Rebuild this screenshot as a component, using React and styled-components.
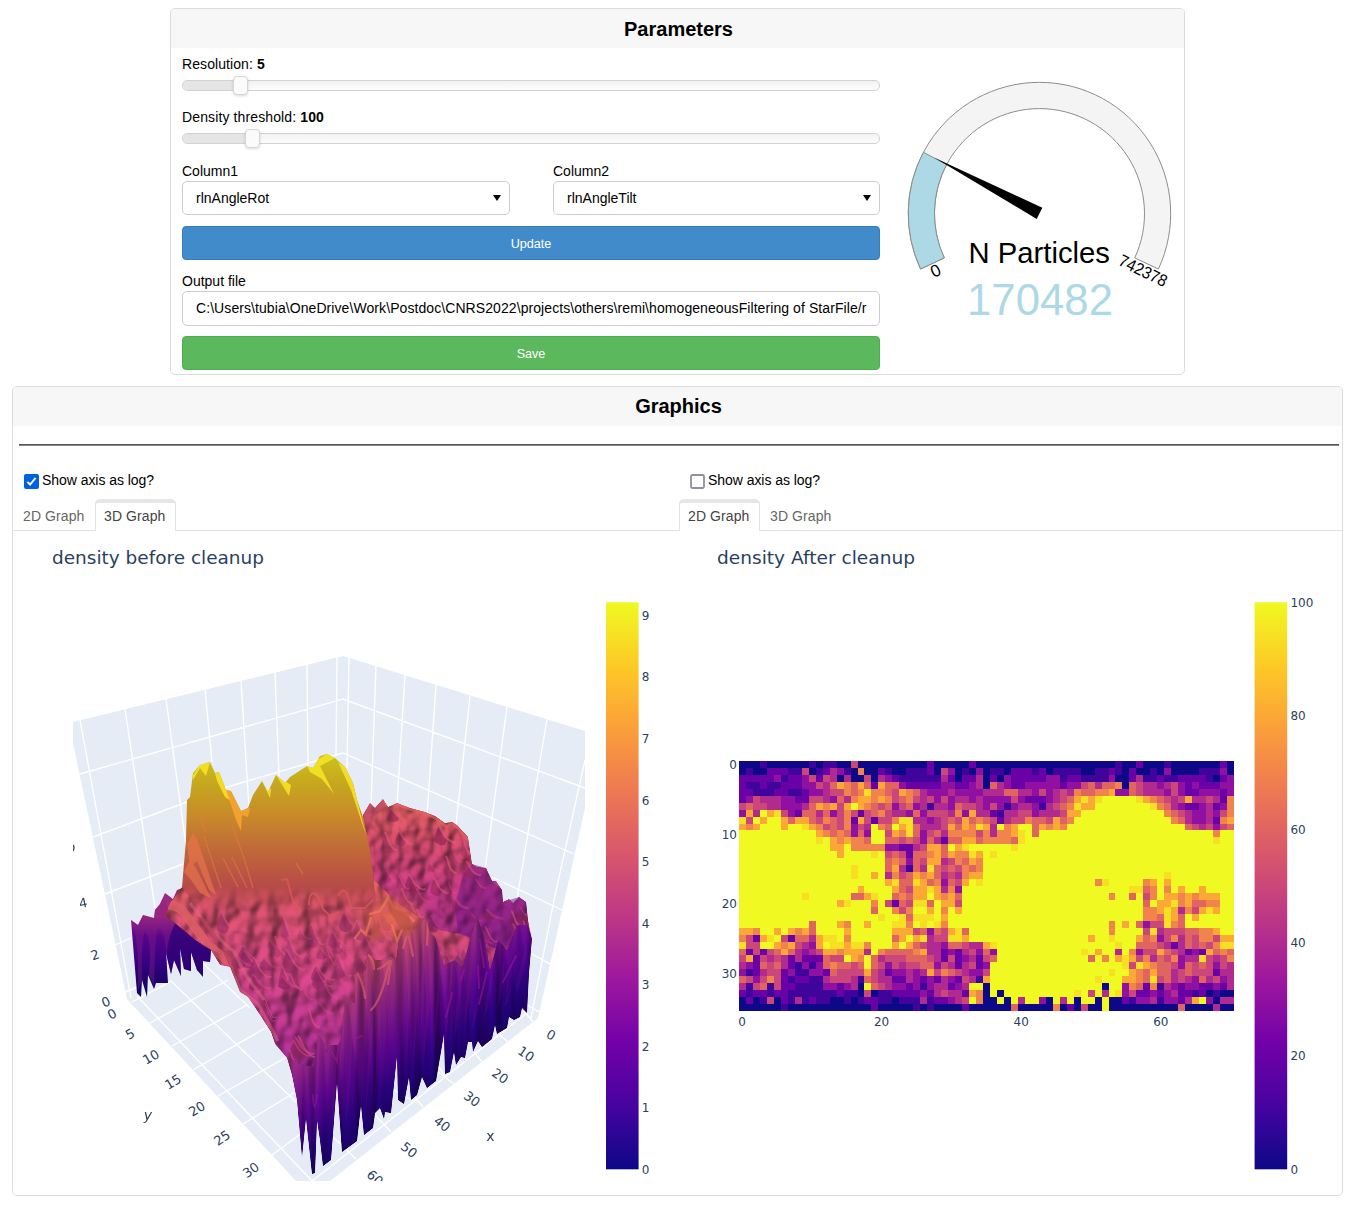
import React from 'react';
import styled, { createGlobalStyle } from 'styled-components';

const Global = createGlobalStyle`
  *, *::before, *::after { box-sizing: border-box; }
  body { margin: 0; background: #fff; color: #000; font: 14px/16px "Liberation Sans", Arial, sans-serif; }
`;
const Page = styled.main`
  width: 1371px; height: 1210px; padding: 8px 28px 14px 12px;
  display: flex; flex-direction: column; align-items: flex-start; gap: 11px; overflow: hidden;
`;
const Card = styled.section`
  width: ${p => p.$w}px; height: ${p => p.$h}px; margin-left: ${p => p.$indent || 0}px;
  border: 1px solid #dcdcdc; border-radius: 5px; overflow: hidden; background: #fff;
`;
const CardHeader = styled.h2`
  margin: 0; height: 39px; background: #f7f7f7; font-size: 20px; line-height: ${p => p.$line || 39}px;
  font-weight: bold; text-align: center; padding-left: 2px;
`;
const ParamsBody = styled.div`display: flex; padding-left: 11px;`;
const Form = styled.div`width: 698px; padding-top: 8px; display: flex; flex-direction: column;`;
const Label = styled.label`display: block; height: 16px; margin-top: ${p => p.$top || 0}px; letter-spacing: ${p => p.$track || 0}px;`;
const Track = styled.div`
  height: 11px; margin-top: 8px; border: 1px solid #d2d2d2; border-radius: 5px;
  background: linear-gradient(#f2f2f2, #fcfcfc); display: flex; align-items: center;
`;
const Fill = styled.div`width: ${p => p.$w}px; height: 9px; background: #e5e5e5; border-radius: 4px 0 0 4px;`;
const Handle = styled.div`
  width: 15px; height: 19px; flex: none; border: 1px solid #d5d5d5; border-radius: 4px;
  background: #fbfbfb; box-shadow: 0 1px 3px rgba(0,0,0,.14);
`;
const Columns = styled.div`display: flex; justify-content: space-between; margin-top: 19px;`;
const Field = styled.div`width: ${p => p.$w}px;`;
const Select = styled.div`
  height: 34px; margin-top: 2px; padding: 0 8px 0 13px; border: 1px solid #ccc; border-radius: 5px;
  display: flex; align-items: center; justify-content: space-between;
  &::after { content: ''; border: 4px solid transparent; border-top: 6px solid #000; border-bottom: 0; }
`;
const Button = styled.button`
  height: 34px; margin-top: ${p => p.$top}px; padding: 1px 0 0; border: 1px solid ${p => p.$edge}; border-radius: 4px;
  background: ${p => p.$bg}; color: #fff; font: 12.6px "Liberation Sans", Arial, sans-serif;
`;
const PathBox = styled.div`
  height: 35px; margin-top: 2px; padding: 0 13px; border: 1px solid #ccc; border-radius: 5px; line-height: 33px;
`;
const PathText = styled.div`white-space: nowrap; letter-spacing: 0.077px;`;
const GaugeSvg = styled.svg`display: block; margin: 33px 0 0 27px; overflow: visible; font-family: "Liberation Sans", Arial, sans-serif;`;
const Rule = styled.hr`margin: 18px 3px 0 6px; height: 2px; border: 0; border-top: 1px solid #555; background: #888;`;
const Plots = styled.div`display: flex; margin-top: 27px;`;
const Pane = styled.div`width: ${p => p.$w}px;`;
const CheckRow = styled.label`display: flex; align-items: center; height: 17px; padding-left: 11px; gap: 3px; line-height: 15px;`;
const Box = styled.span`
  width: 15px; height: 15px; margin-top: -1px; border-radius: 2px; display: flex;
  background: ${p => (p.$on ? '#0060df' : '#fff')};
  svg { display: block; }
`;
const CheckText = styled.span`margin-top: -2px; letter-spacing: -0.05px;`;
const Tabs = styled.div`display: flex; height: 32px; margin-top: 9px; border-bottom: 1px solid #e2e2e2;`;
const Tab = styled.div`
  width: ${p => (p.$active ? 81 : 82)}px; height: ${p => (p.$active ? 32 : 31)}px; letter-spacing: 0.1px;
  padding: ${p => (p.$active ? '5px 0 0 8px' : '9px 0 0 10px')};
  color: ${p => (p.$active ? '#444' : '#666')};
  ${p => p.$active && 'border: 1px solid #e2e2e2; border-top: 4px solid #e6e6e6; border-bottom: 0; border-radius: 5px 5px 0 0; background: #fff;'}
`;
const PlotSvg = styled.svg`
  display: block; font-family: "DejaVu Sans", Verdana, sans-serif; font-size: 12px;
  text { fill: #2a3f5f; }
`;

const plasma = ['#0d0887', '#46039f', '#7201a8', '#9c179e', '#bd3786', '#d8576b', '#ed7953', '#fb9f3a', '#fdca26', '#f0f921'];
function heat(t) {
  const p = Math.min(0.9999, Math.max(0, t)) * 9;
  const i = Math.floor(p), f = p - i;
  const c = k => [1, 3, 5].map(n => parseInt(plasma[k].slice(n, n + 2), 16));
  const a = c(i), b = c(i + 1);
  return `rgb(${a.map((v, n) => Math.round(v + (b[n] - v) * f)).join(',')})`;
}

const Y = 'YYYYYYYYYY';
const rows = [
  ['0001000000', '1011005000', '0000000200', '0002000000', '0000000000', '0000100200', '0100000002', '0'],
  ['0100222115', '0124310700', '2100111205', '3010301102', '2212011110', '0112102001', '0300001113', '0'],
  ['2222231223', '5254040050', '4321111114', '2022402032', '2222331221', '1113002411', '2112222102', '3'],
  ['2112112223', '3546876862', '8663222223', '3223406432', '2333332335', '6466706544', '3453232223', '3'],
  ['2211122112', '3345576797', '7658764333', '4333344466', '4435345476', '6778336544', '4353223332', '3'],
  ['2354443322', '5543647887', '8756754535', '3443433335', '3222345689', '89YYYYY987', '6545844542', '7'],
  ['5655443334', '687858Y876', '5635634144', '3655435313', '4431456798', '8YYYYYYYY9', '7643223423', '7'],
  ['384Y895326', '6463575256', '7544363555', '4738442144', '553444588Y', Y, 'Y765433435', '7'],
  ['95Y8YY8688', '6576572852', '5579944345', '6586765245', '57665867YY', Y, 'YY76433427', '8'],
  ['878YYY8YY9', '875657354Y', '76Y8964445', '8687984Y78', 'YY68787YYY', Y, 'YYYY654535', '6'],
  [Y, 'Y87676363Y', 'Y587963564', '7777574778', '9Y6YYYYYYY', Y, 'YYYYYYYY7Y', 'Y'],
  [Y, 'Y9Y878776Y', 'Y665653642', '6688677776', '9YYYYYYYYY', Y, 'YYYYYYYY9Y', 'Y'],
  [Y, 'YYY88Y7777', '7332245886', 'Y89YYYYYY9', Y, Y, Y, 'Y'],
  [Y, 'YYYY8YYYY9', 'Y565266786', '87798Y9YYY', Y, Y, Y, 'Y'],
  [Y, Y, 'Y676365884', '57687YYYYY', Y, Y, Y, 'Y'],
  [Y, 'YYYYYY9YYY', 'Y684164965', '65767YYYYY', Y, Y, Y, 'Y'],
  [Y, 'YYYYYY9YY8', 'Y475687864', '54788YYYYY', Y, Y, 'Y9YYYYYYYY', 'Y'],
  [Y, Y, 'Y896698673', '658Y9YYYYY', Y, 'Y79YYYYY78', 'Y8YYYYYYYY', 'Y'],
  [Y, 'YYYYYYY8YY', 'YY86588984', '73YYYYYYYY', Y, 'YYYYYY9967', 'Y7Y8YY8YYY', 'Y'],
  ['YYYYYYYYY9', 'YYYYYY6689', 'YY67688Y87', '86YYYYYYYY', Y, 'YYY7YY6Y57', 'Y88787888Y', 'Y'],
  [Y, 'YYYY89YYY7', 'Y5265996Y8', '85YYYYYYYY', Y, 'YYYYYYYY6Y', '889786677Y', 'Y'],
  [Y, 'YYYYYYYYY6', 'YY757YY8Y7', 'Y8YYYYYYYY', Y, 'YYYYYYYY77', '898475898Y', 'Y'],
  [Y, Y, '9YY96999Y8', Y, Y, 'YYYYYYYY77', '6986Y8YYYY', 'Y'],
  [Y, '6YYY87YY8Y', 'YY997Y9Y97', Y, Y, 'YYY7Y8Y635', '5976YYYYYY', 'Y'],
  ['887YY8Y878', '6YYYY8YYYY', 'YY88856365', '896YYYYYYY', Y, 'YYY7YYYY59', '455566778Y', 'Y'],
  ['75289Y5266', '4899Y7YYYY', 'YY68Y89455', '998YYYYYYY', Y, '8YY9YYY867', '3574657758', '8'],
  ['955YY87854', '38Y998997Y', 'YY8Y865443', '6654489YYY', Y, 'YYYY9YY666', '5424656579', '9'],
  ['6252568643', '458878884Y', '7666678442', '3245363YYY', 'YYYYYYYYY9', 'Y8YY4Y7355', '8654232867', '6'],
  ['5825454242', '22655Y87Y6', '4555666542', '5234256YYY', Y, '6Y7Y898574', '6573449545', '7'],
  ['4326564213', '13676656Y6', '5354556635', '424523YYYY', Y, 'YYYYY95987', '6653656535', '4'],
  ['3124552311', '3326555585', '4233434857', '654335YYYY', Y, 'YYY9YY8768', '6645655524', '4'],
  ['6535752122', '1145554165', '4422432324', '325418YYYY', Y, 'Y9YYY88769', '5645436453', '4'],
  ['4156152211', '11332340Y6', '5433231344', '234YY0YYYY', Y, 'YY0YY37627', '1432332232', '4'],
  ['2122122111', '1111211050', '1122223245', '442870Y0YY', 'YYYYYYYY9Y', '5Y4Y935223', '2342212010', '0'],
  ['0201502141', '2110010122', '1101114122', '345Y700Y0Y', '4YY30Y4Y0Y', 'Y0Y0021334', '133248Y304', '4'],
  ['0000001000', '0000000002', '0000010100', '0020000006', '0000070205', '00Y0000000', '0006000040', '0'],
].map(r => r.join(''));

const level = ch => (ch === 'Y' ? 1 : Number(ch) / 10 + (ch === '9' ? 0.04 : 0));

function Gauge() {
  return (
    <GaugeSvg width="266" height="242" viewBox="907 81 266 242">
      <path d="M920.6 269A131.2 131.2 0 1 1 1158.4 269L1134.7 257.9A105 105 0 1 0 944.3 257.9Z" fill="#f4f4f4" stroke="#8c8c8c" strokeWidth="1" />
      <path d="M920.6 269A131.2 131.2 0 0 1 923.4 152.3L946.6 164.5A105 105 0 0 0 944.3 257.9Z" fill="#add8e6" stroke="#8c8c8c" strokeWidth="1" />
      <path d="M934 157.5L1042.3 207.7L1036.7 219Z" />
      <text x="968.5" y="262.5" fontSize="29" textLength="141.5" lengthAdjust="spacingAndGlyphs">N Particles</text>
      <text x="967" y="314.5" fontSize="44" fill="#add8e6" textLength="146" lengthAdjust="spacingAndGlyphs">170482</text>
      <text fontSize="17" textAnchor="middle" transform="translate(938 276) rotate(-25)">0</text>
      <text fontSize="17" textAnchor="middle" transform="translate(1140.5 276) rotate(26)" textLength="52" lengthAdjust="spacingAndGlyphs">742378</text>
    </GaugeSvg>
  );
}

function ColorBar({ x, id, ticks }) {
  return (
    <g>
      <linearGradient id={id} x1="0" y1="1" x2="0" y2="0">
        {plasma.map((c, i) => <stop key={c} offset={i / 9} stopColor={c} />)}
      </linearGradient>
      <rect x={x} y="602.3" width="32.6" height="567" fill={`url(#${id})`} />
      {ticks.map(([t, y]) => <text key={t} x={x + 35.8} y={y + 4.5}>{t}</text>)}
    </g>
  );
}

const gridLines = `M80 720L131 998M125 709L155 908M166 699L187 853M205 689L212 762M241 681L249 808M275 672L279 776M307 664L308 768
M337 657L336 756M349 657L347 768M376 666L371 805M405 675L397 805M436 685L427 815M470 696L456 825M507 707L485 870M547 719L517 899M585 760L554 900L531 1018
M80 774L343 699L585 788M93 837L227 787L343 753L574 854M105 894L183 864M492 877L562 910M115 945L131 938M532 954L550 964M125 992L140 986M527 1005L539 1012
M132 1002L170 982M150 1023L228 980M172 1046L247 1005M193 1070L267 1027M218 1096L285 1058M243 1124L297 1091M272 1155L302 1133
M137 996L312 1181L527 1013M170 980L297 1103M203 963L250 1008M523 1010L533 1022M500 1035L508 1042M474 1052L482 1062M438 1072L454 1084M415 1097L423 1107M375 1115L391 1132M333 1137L356 1159M400 1000L445 1077M340 1060L417 1103`;

const frontEdge = `532,939 529,973 527,1013 522,1008 520,1017 514,1020 509,1017 507,1028 497,1034 495,1025 492,1039 482,1047 478,1041 473,1052 472,1042 468,1042 465,1058 461,1057 456,1065 454,1052 450,1072 445,1074 444,1034 436,1081 427,1088 422,1077 417,1095 411,1100 409,1077 404,1104 398,1100 397,1056 391,1113 385,1112 384,1119 380,1108 375,1113 373,1128 364,1135 361,1105 357,1141 342,1152 337,1082 331,1160 323,1166 320,1140 317,1120 315,1173 312,1174 306,1118 302,1157 297,1100 292,1075`;
const body = `182,887 200,870 260,850 363,860 363,815 370,803 375,808 383,799 388,807 397,803 410,808 425,812 435,816 445,823 452,822 457,825 468,837 472,864 477,867 486,868 492,881 496,881 502,890 503,902 509,899 513,903 519,897 526,902 528,920 ${frontEdge} 287,1058 275,1044 271,1032 262,1018 248,997 240,992 230,967 220,965 211,950 195,940 165,915 170,903`;
const wall = `345,997 355,1003 354,975 358,972 364,985 368,953 376,960 382,960 390,956 396,960 400,930 412,930 420,925 425,917 430,932 435,937 444,965 455,960 462,968 470,940 477,917 485,938 490,970 498,940 507,950 517,925 528,925 ${frontEdge} 287,1057 299,1063 305,1066 314,1066 318,1034 324,1042 327,1052 330,1045 338,1045 341,1040`;
const dome = `363,815 370,803 375,808 383,799 388,807 397,803 410,808 425,812 435,816 445,823 452,822 457,825 468,837 472,864 477,867 486,868 492,881 496,881 502,890 503,902 509,899 513,903 519,897 526,902 530,940 500,950 465,935 440,930 400,905 374,880`;
const leftSheet = `131,920 138,925 143,915 154,918 155,910 160,904 165,893 173,899 177,890 190,885 205,910 211,950 210,962 203,961 203,977 197,970 191,952 191,971 184,969 180,948 181,976 174,960 171,974 166,953 168,983 156,983 154,989 148,975 147,997 142,980 141,997 137,993`;
const peak = `182,887 186,840 187,800 190,797 193,773 200,765 210,762 215,773 219,772 226,790 231,791 241,811 248,808 253,795 262,781 268,792 276,775 285,783 290,777 307,766 313,768 320,756 327,754 335,758 345,767 353,783 357,800 363,817 370,850 376,900 372,912 352,915 325,915 300,912 280,914 258,910 238,910 212,914 195,905`;

function inside(pts, x, y) {
  let hit = false;
  for (let i = 0, j = pts.length - 1; i < pts.length; j = i++) {
    const [xi, yi] = pts[i], [xj, yj] = pts[j];
    if (yi > y !== yj > y && x < ((xj - xi) * (y - yi)) / (yj - yi) + xi) hit = !hit;
  }
  return hit;
}
const parse = s => s.trim().split(/\s+/).map(p => p.split(',').map(Number));
function rng(seed) {
  let s = seed;
  return () => { s = (s * 16807) % 2147483647; return s / 2147483647; };
}
function scatter(poly, n, seed) {
  const pts = parse(poly), r = rng(seed);
  const xs = pts.map(p => p[0]), ys = pts.map(p => p[1]);
  const x0 = Math.min(...xs), x1 = Math.max(...xs), y0 = Math.min(...ys), y1 = Math.max(...ys);
  const out = [];
  while (out.length < n) {
    const x = x0 + r() * (x1 - x0), y = y0 + r() * (y1 - y0);
    if (inside(pts, x, y)) out.push([x, y, r(), r(), r()]);
  }
  return out.sort((a, b) => a[1] - b[1]);
}
function Crests({ poly, n, seed, dark, light, clip, size = 1 }) {
  return (
    <g clipPath={`url(#${clip})`}>
      <g filter="url(#soft)">
        {scatter(poly, n, seed).map(([x, y, a, b, c], i) => {
          const w = (4 + a * 5) * size, h = (9 + b * 14) * size, s = (c - 0.3) * 8;
          return (
            <g key={i}>
              <path d={`M${x} ${y}C${x + w * 0.4} ${y + h * 0.2} ${x + w * 0.5} ${y + h * 0.5} ${x + w} ${y + h * 0.65}C${x + w * 0.9} ${y + h} ${x + s} ${y + h * 1.1} ${x - w * 0.5} ${y + h * 0.8}C${x - w * 0.5} ${y + h * 0.4} ${x - w * 0.3} ${y + h * 0.4} ${x} ${y}`} fill={dark} opacity={0.2 + a * 0.4} />
              <path d={`M${x} ${y}C${x + w * 0.4} ${y + h * 0.2} ${x + w * 0.5} ${y + h * 0.5} ${x + w} ${y + h * 0.65}Q${x + w * 1.4 + s} ${y + h * 0.9} ${x + w * 1.9} ${y + h * 0.8}`} fill="none" stroke={light} strokeLinecap="round" strokeWidth={0.9 + c * 1.6} opacity={0.2 + b * 0.4} />
            </g>
          );
        })}
      </g>
    </g>
  );
}

/* apex x, apex y, reach to the left, reach to the right, shade */
const slabs = [
  [425, 917, 5, 6, 0.12], [435, 937, 12, 10, 0.16], [477, 917, 13, 14, 0.17], [517, 925, 12, 12, 0.1], [400, 931, 6, 11, 0.1],
  [412, 930, 6, 7, 0.12], [453, 960, 9, 9, 0.16], [368, 953, 7, 9, 0.14], [358, 972, 6, 14, 0.14], [390, 957, 9, 8, 0.1], [420, 940, 7, 8, 0.13],
  [493, 967, 9, 6, 0.15], [505, 957, 8, 9, 0.12], [462, 970, 8, 8, 0.14], [440, 975, 7, 7, 0.13], [345, 997, 9, 12, 0.13], [382, 965, 7, 8, 0.12],
  [528, 940, 12, 5, 0.14], [512, 980, 8, 8, 0.12], [480, 985, 8, 8, 0.14], [374, 1003, 8, 8, 0.12],
  [320, 1032, 7, 8, 0.12], [337, 1045, 5, 5, 0.1], [352, 1040, 6, 7, 0.13], [303, 1065, 5, 6, 0.12],
];
function Slabs() {
  return (
    <g clipPath="url(#clipWall)">
      {slabs.map(([x, y, l, r, o], i) => {
        const floor = 1178 - 0.757 * (x - 312), m = y + (floor - y) * 0.3;
        return (
          <g key={i}>
            <path d={`M${x} ${y}C${x + r * 0.5} ${y + 12} ${x + r * 0.9} ${m} ${x + r} ${floor}L${x} ${floor}Q${x - 2} ${m} ${x} ${y}`} fill="#24004e" opacity={o * 1.1} />
            <path d={`M${x} ${y}C${x - l * 0.3} ${y + 15} ${x - l * 0.8} ${m} ${x - l} ${floor - 20}Q${x - l * 0.2} ${m + 10} ${x} ${y}`} fill="#a8308c" opacity={o * 0.8} />
          </g>
        );
      })}
      <g filter="url(#soft)" fill="none" strokeLinecap="round">
        <path d="M378 969Q384 967 390 960L388 968Q381 1001 371 1010M358 973Q364 987 365 998M391 961L388 984M368 955Q374 959 374 969M403 948L408 932L413 956M428 922L427 945" stroke="#df6665" strokeWidth="2.2" opacity=".6" />
        <path d="M452 993Q448 1010 446 1017M478 966L479 988M464 970L461 980M487 972L479 1004M516 956L503 982M480 940L484 967M332 1052L337 1062L338 1045M343 1026L342 1031M357 1038L362 1036M313 1095Q314 1119 317 1095" stroke="#a31c9b" strokeWidth="1.8" opacity=".5" />
      </g>
    </g>
  );
}
function Relief({ id, freq, octaves, scale, seed, base }) {
  return (
    <filter id={id} x="0" y="0" width="100%" height="100%" colorInterpolationFilters="sRGB">
      <feTurbulence type="fractalNoise" baseFrequency={freq} numOctaves={octaves} seed={seed} result="noise" />
      <feDiffuseLighting in="noise" surfaceScale={scale} diffuseConstant="1" lightingColor="#fff" result="lit">
        <feDistantLight azimuth="215" elevation="48" />
      </feDiffuseLighting>
      <feComposite in="SourceGraphic" in2="lit" operator="arithmetic" k1={(1 - base) / 0.74} k2={base} k3="0" k4="0" result="shaded" />
      <feComposite in="shaded" in2="SourceGraphic" operator="in" />
    </filter>
  );
}
function Grad({ id, y1, y2, stops, slope = 0 }) {
  return (
    <linearGradient id={id} gradientUnits="userSpaceOnUse" x1="0" y1={y1} x2="0" y2={y2} gradientTransform={`matrix(1 ${slope} 0 1 0 ${-slope * 312})`}>
      {stops.map(([o, c, a]) => <stop key={o} offset={o} stopColor={c} stopOpacity={a === undefined ? 1 : a} />)}
    </linearGradient>
  );
}

const axisLabels = [
  ['4', 83, 903, -12], ['2', 95, 955, -18], ['0', 106, 1002, -22], ['0', 112, 1014, -28], ['5', 130, 1034, -30],
  ['10', 151, 1057, -30], ['15', 173, 1082, -31], ['20', 197, 1109, -31], ['25', 222, 1138, -34], ['30', 251, 1170, -35],
  ['0', 551, 1035, 28], ['10', 526, 1054, 34], ['20', 500, 1076, 35], ['30', 472, 1099, 36], ['40', 442, 1124, 38],
  ['50', 409, 1150, 39], ['60', 375, 1178, 42],
];

function SurfacePlot() {
  return (
    <PlotSvg width="666" height="659" viewBox="13 531 666 659">
      <defs>
        <clipPath id="scene"><rect x="73" y="590" width="512" height="591" /></clipPath>
        <clipPath id="clipBody"><polygon points={body} /></clipPath>
        <clipPath id="clipWall"><polygon points={wall} /></clipPath>
        <clipPath id="clipDome"><polygon points={dome} /></clipPath>
        <clipPath id="clipPeak"><polygon points={peak} /></clipPath>
        <clipPath id="clipLeft"><polygon points={leftSheet} /></clipPath>
        <filter id="soft" x="-5%" y="-5%" width="110%" height="110%"><feGaussianBlur stdDeviation="0.55" /></filter>
        <Relief id="bumps" freq="0.055 0.045" octaves={2} scale={8} seed={7} base={0.5} />
        <Relief id="domeBumps" freq="0.06 0.05" octaves={2} scale={7.5} seed={21} base={0.5} />
        <Relief id="folds" freq="0.08 0.006" octaves={2} scale={4} seed={4} base={0.5} />
        <radialGradient id="glow"><stop offset="0" stopColor="#e87048" stopOpacity=".8" /><stop offset=".45" stopColor="#d9614d" stopOpacity=".5" /><stop offset="1" stopColor="#d05560" stopOpacity="0" /></radialGradient>
        <Grad id="gBody" y1={880} y2={1120} stops={[[0, '#c95652'], [0.12, '#c44a62'], [0.4, '#bd3e78'], [0.7, '#a02b86'], [1, '#4b087f']]} />
        <Grad id="gWall" y1={1175} y2={965} slope={-0.757} stops={[[0, '#160462'], [0.14, '#28037c'], [0.34, '#5c068c'], [0.54, '#86207f'], [0.75, '#a93c68'], [0.95, '#c4544f'], [1, '#cc5d4c']]} />
        <Grad id="gDome" y1={800} y2={945} stops={[[0, '#d15a59'], [0.25, '#c1465f'], [0.6, '#b43675'], [1, '#962880']]} />
        <Grad id="gPeak" y1={755} y2={915} stops={[[0, '#cbc319'], [0.16, '#c7aa1e'], [0.38, '#c88a29'], [0.62, '#bf653a'], [0.82, '#b64b49'], [0.97, '#b63f59', 0]]} />
        <Grad id="gLeft" y1={890} y2={985} stops={[[0, '#982a83'], [0.28, '#a02b7b'], [0.48, '#57068b'], [0.75, '#370181'], [1, '#170366']]} />
      </defs>
      <text x="52" y="563.5" fontSize="18" textLength="212" lengthAdjust="spacingAndGlyphs">density before cleanup</text>
      <g clipPath="url(#scene)">
        <polygon points="73,722 343,656 585,731 585,808 538,1018 330,1181 296,1181 127,999 73,743" fill="#e5ecf6" />
        <path d={gridLines} stroke="#fff" strokeWidth="1.35" fill="none" />
        <polygon points={leftSheet} fill="url(#gLeft)" />
        <g clipPath="url(#clipLeft)">
          <path d="M131 920Q139 935 138 990L142 980Q141 940 145 931Q152 940 149 975L154 987Q155 935 158 926Q166 934 166 955L171 945L174 921L162 897L143 915Z" fill="#8a1b85" opacity=".4" />
          <path d="M166 960Q168 930 180 917Q195 930 211 946L211 965L170 985Z" fill="#2c0273" opacity=".7" />
        </g>
        <polygon points={body} fill="url(#gBody)" filter="url(#bumps)" />
        <polygon points={dome} fill="url(#gDome)" filter="url(#domeBumps)" />
        <polygon points="463,875 472,864 486,868 492,881 502,890 503,902 519,897 526,902 530,940 490,950 458,932 455,905" fill="#701383" opacity=".5" />
        <Crests poly={dome} n={30} seed={47} dark="#862052" light="#e35f7c" clip="clipDome" size={0.95} />
        <polygon points="366,828 363,815 370,803 375,808 383,799 386,808 374,816 368,830" fill="#a33963" opacity=".45" />
        <path d="M397 804L410 809L425 813L435 818L447 827L452 822L460 830L467 840" stroke="#e8655f" strokeWidth="3" fill="none" opacity=".6" clipPath="url(#clipDome)" />
        <Crests poly="205,905 260,905 375,905 385,915 375,950 355,975 335,1030 297,1062 250,990 225,945" n={44} seed={137} dark="#8a2560" light="#de5488" clip="clipBody" size={1.1} />
        <Crests poly="405,905 470,925 520,920 525,950 485,955 460,960 445,960 430,930" n={12} seed={59} dark="#712164" light="#be3a80" clip="clipBody" size={0.9} />
        <ellipse cx="392" cy="918" rx="42" ry="32" fill="url(#glow)" clipPath="url(#clipBody)" />
        <polygon points={wall} fill="url(#gWall)" filter="url(#folds)" />
        <Slabs />
        <g filter="url(#soft)" fill="none" strokeLinecap="round">
          <path d="M370 914L380 911L388 898L393 907L405 913L414 921M355 938L361 930L366 934L371 918M392 925L397 941L402 930" stroke="#f2804f" strokeWidth="2.4" opacity=".6" />
          <path d="M388 898L396 908L408 913L413 929L408 938L398 925L388 908ZM374 919L370 942L383 937Z" fill="#b9533f" opacity=".6" stroke="none" />
        </g>
        <g clipPath="url(#clipBody)">
          <g filter="url(#soft)" fill="none">
            <path d="M168 905Q180 905 188 918L207 944L229 962" stroke="#df6164" strokeWidth="9" opacity=".75" />
            <path d="M190 903L212 932L234 952L247 977L264 1000M229 962L240 990L258 1004L278 1041" stroke="#e2657a" strokeWidth="3.5" opacity=".5" />
            <path d="M196 916L205 919L220 940L214 941ZM222 950L232 951L240 975L234 976ZM206 946L218 953L222 964L214 959Z" fill="#a0384e" opacity=".5" />
          </g>
        </g>
        <polygon points={peak} fill="url(#gPeak)" />
        <g clipPath="url(#clipPeak)">
          <g filter="url(#soft)">
            <path d="M193 775L200 765L210 762L206 776L200 768L193 780M215 773L219 772L231 801L225 797L217 781M262 781L271 789L270 798ZM276 775L291 785L289 796ZM307 766L327 754L335 758L320 766L334 794L322 779L310 772M338 762L345 767L353 783L357 800L366 835L351 790Z" fill="#f6e224" opacity=".9" />
            <path d="M226 790L231 791L241 811L250 808L248 817L242 815L241 831L236 820Z" fill="#f6a431" opacity=".9" />
            <path d="M187 844L193 833L197 839L205 862L216 895L209 890L197 861L190 867M184 872L190 860L196 868L211 898L200 893L191 880" fill="#e9744b" opacity=".65" />
            <path d="M223 858L238 887M232 857L247 888M204 836L221 888M231 822L244 858L253 888M199 812L205 832M296 863L303 874" stroke="#e57b45" strokeWidth="1.5" fill="none" opacity=".5" />
          </g>
        </g>
        <path d="M281 880L287 879L293 901L301 912M309 905Q309 893 314 893Q320 897 323 909L330 916L339 912M338 896Q342 887 347 893L351 908L365 908L373 900" stroke="#db5c56" strokeWidth="2.2" fill="none" opacity=".7" filter="url(#soft)" />
        {axisLabels.map(([t, x, y, r], i) => (
          <text key={i} fontSize="13" textAnchor="middle" transform={`translate(${x} ${y}) rotate(${r})`} y="4.5">{t}</text>
        ))}
        <text x="148" y="1120" textAnchor="middle" fontSize="14" fontStyle="italic">y</text>
        <text x="490.5" y="1141" textAnchor="middle" fontSize="14">x</text>
        <path d="M73 845q2 2 0 6" stroke="#2a3f5f" strokeWidth="1.3" fill="none" />
      </g>
      <ColorBar x={606} id="barLeft" ticks={[0, 1, 2, 3, 4, 5, 6, 7, 8, 9].map(n => [n, 1169.3 - n * 61.55])} />
    </PlotSvg>
  );
}

function HeatPlot() {
  const x0 = 739, y0 = 761, cw = 495 / 71, ch = 250 / 36;
  return (
    <PlotSvg width="663" height="659" viewBox="679 531 663 659">
      <text x="717" y="563.5" fontSize="18" textLength="198" lengthAdjust="spacingAndGlyphs">density After cleanup</text>
      <rect x={x0} y={y0} width="495" height="250" fill="#f0f921" />
      <g shapeRendering="crispEdges">
        {rows.map((row, r) => [...row].map((v, c) => {
          if (v === 'Y') return null;
          const xa = Math.round(x0 + c * cw), ya = Math.round(y0 + r * ch);
          return <rect key={`${r}-${c}`} x={xa} y={ya} width={Math.round(x0 + (c + 1) * cw) - xa} height={Math.round(y0 + (r + 1) * ch) - ya} fill={heat(level(v))} />;
        }))}
      </g>
      {[0, 10, 20, 30].map(n => <text key={n} x="737" y={769 + n * 6.96} textAnchor="end">{n}</text>)}
      {[0, 20, 40, 60].map(n => <text key={n} x={742 + n * 6.98} y="1026" textAnchor="middle">{n}</text>)}
      <ColorBar x={1254.6} id="barRight" ticks={[0, 20, 40, 60, 80, 100].map(n => [n, 1169.3 - n * 5.67])} />
    </PlotSvg>
  );
}

function Check({ on }) {
  return (
    <CheckRow>
      <Box $on={on}>
        <svg width="15" height="15" viewBox="0 0 15 15">
          {on
            ? <path d="M3.4 7.8l2.7 2.8 5.4-6.6" fill="none" stroke="#fff" strokeWidth="1.9" />
            : <rect x="1" y="1" width="13" height="13" rx="1.5" fill="#fff" stroke="#8f8f9d" strokeWidth="1.8" />}
        </svg>
      </Box>
      <CheckText>Show axis as log?</CheckText>
    </CheckRow>
  );
}

function GraphPane({ width, logAxis, active, children }) {
  return (
    <Pane $w={width}>
      <Check on={logAxis} />
      <Tabs>
        {['2D Graph', '3D Graph'].map(name => <Tab key={name} $active={name === active}>{name}</Tab>)}
      </Tabs>
      {children}
    </Pane>
  );
}

export default function App() {
  return (
    <Page>
      <Global />
      <Card $w={1015} $h={367} $indent={158}>
        <CardHeader $line={41}>Parameters</CardHeader>
        <ParamsBody>
          <Form>
            <Label $track={0.08}>Resolution: <b>5</b></Label>
            <Track><Fill $w={50} /><Handle /></Track>
            <Label $top={18} $track={0.12}>Density threshold: <b>100</b></Label>
            <Track><Fill $w={62} /><Handle /></Track>
            <Columns>
              <Field $w={328}><Label>Column1</Label><Select>rlnAngleRot</Select></Field>
              <Field $w={327}><Label>Column2</Label><Select>rlnAngleTilt</Select></Field>
            </Columns>
            <Button $top={11} $bg="#428bca" $edge="#357ebd">Update</Button>
            <Label $top={13}>Output file</Label>
            <PathBox><PathText>{'C:\\Users\\tubia\\OneDrive\\Work\\Postdoc\\CNRS2022\\projects\\others\\remi\\homogeneousFiltering of StarFile/r'}</PathText></PathBox>
            <Button $top={10} $bg="#5cb85c" $edge="#4cae4c">Save</Button>
          </Form>
          <div><Gauge /></div>
        </ParamsBody>
      </Card>
      <Card $w={1331} $h={810}>
        <CardHeader>Graphics</CardHeader>
        <Rule />
        <Plots>
          <GraphPane width={666} logAxis active="3D Graph"><SurfacePlot /></GraphPane>
          <GraphPane width={663} active="2D Graph"><HeatPlot /></GraphPane>
        </Plots>
      </Card>
    </Page>
  );
}
